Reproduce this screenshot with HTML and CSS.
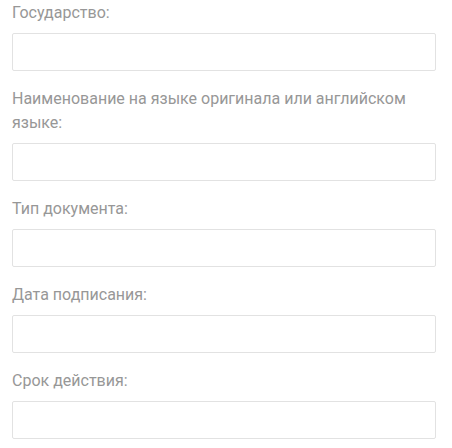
FILE: index.html
```html
<!DOCTYPE html>
<html lang="ru">
<head>
<meta charset="utf-8">
<link rel="stylesheet" href="styles.css">
</head>
<body>
<form class="form">
  <div class="field">
    <label class="label">Государство:</label>
    <input class="input" type="text">
  </div>
  <div class="field">
    <label class="label">Наименование на языке оригинала или английском языке:</label>
    <input class="input" type="text">
  </div>
  <div class="field">
    <label class="label">Тип документа:</label>
    <input class="input" type="text">
  </div>
  <div class="field">
    <label class="label">Дата подписания:</label>
    <input class="input" type="text">
  </div>
  <div class="field">
    <label class="label">Срок действия:</label>
    <input class="input" type="text">
  </div>
</form>
</body>
</html>
```
FILE: styles.css
```css
html, body {
  margin: 0;
  padding: 0;
  background: #ffffff;
}
.form {
  width: 424px;
  padding: 1px 0 0 12px;
  display: flex;
  flex-direction: column;
  gap: 16px;
  font-family: Roboto, "Liberation Sans", sans-serif;
}
.field {
  display: flex;
  flex-direction: column;
  gap: 8px;
}
.label {
  font-size: 16px;
  font-weight: 400;
  line-height: 24px;
  color: #979797;
}
.input {
  box-sizing: border-box;
  width: 424px;
  height: 38px;
  margin: 0;
  border: 1px solid #e2e2e2;
  border-radius: 2px;
  background: #fff;
  outline: none;
  padding: 0 10px;
}
```
